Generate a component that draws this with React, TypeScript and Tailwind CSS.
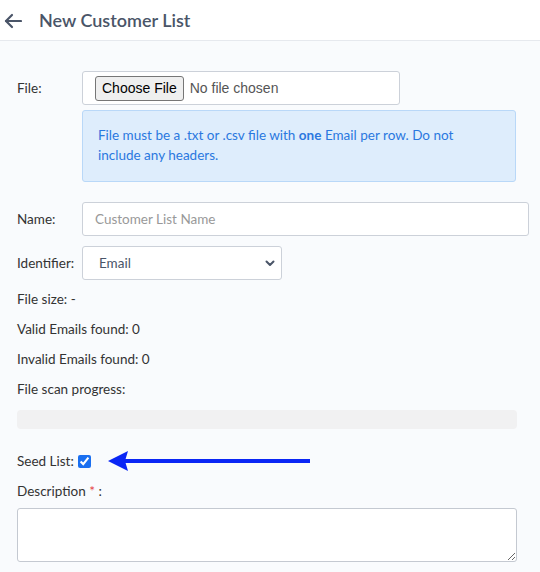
import { useState } from "react"

const font = { fontFamily: "Lato, 'Open Sans', Arial, sans-serif" }

function BackArrow() {
  return (
    <svg width="18" height="16" viewBox="0 0 18 16" fill="none" stroke="#4a5568" strokeWidth="2.2" strokeLinecap="round" strokeLinejoin="round">
      <path d="M17 8H2" />
      <path d="M8 2L2 8l6 6" />
    </svg>
  )
}

function PointerArrow() {
  return (
    <svg width="205" height="22" viewBox="0 0 205 22" className="ml-[17px]">
      <polygon points="0,11 20,1 17,11 20,21" fill="#0a26f5" />
      <rect x="16" y="9" width="186" height="4" fill="#0a26f5" />
    </svg>
  )
}

export default function App() {
  const [seed, setSeed] = useState(true)

  return (
    <div className="min-h-[572px] w-[540px] bg-[#f9fbfd] text-[13.5px] text-[#333]" style={font}>
      {/* Header */}
      <div className="flex h-[41px] items-center border-b border-[#e6e9ee] bg-white">
        <div className="ml-[4px] mt-[1px]">
          <BackArrow />
        </div>
        <h1 className="ml-[17px] text-[18px] font-semibold text-[#4a5568]">New Customer List</h1>
      </div>

      <div className="pl-[17px] pr-[11px] pt-[30px]">
        {/* File */}
        <div className="flex">
          <label className="w-[65px] shrink-0 pt-[7px] leading-[20px]">File:</label>
          <div>
            <div className="flex h-[34px] w-[318px] items-center rounded-[3px] border border-[#ccd1d9] bg-white pl-[12px]">
              <input
                type="file"
                className="text-[14px] text-[#555] file:mr-[6px] file:rounded-[3px] file:border file:border-[#767676] file:bg-[#efefef] file:px-[6px] file:py-[1px] file:text-[14px] file:text-black"
                style={{ fontFamily: "'Liberation Sans', Arial, sans-serif" }}
              />
            </div>
            <div className="mt-[5px] h-[72px] w-[434px] rounded-[3px] border border-[#b9d8f8] bg-[#deedfc] pl-[15px] pr-[30px] pt-[14px] leading-[20px] text-[#2a78df]">
              File must be a .txt or .csv file with <b>one</b> Email per row. Do not include any headers.
            </div>
          </div>
        </div>

        {/* Name */}
        <div className="mt-[20px] flex items-center">
          <label className="w-[65px] shrink-0">Name:</label>
          <input
            placeholder="Customer List Name"
            className="h-[34px] w-[447px] rounded-[3px] border border-[#ccd1d9] bg-white px-[12px] text-[13.5px] placeholder:text-[#999]"
          />
        </div>

        {/* Identifier */}
        <div className="mt-[10px] flex items-center">
          <label className="w-[65px] shrink-0">Identifier:</label>
          <div className="relative">
            <select className="h-[34px] w-[200px] appearance-none rounded-[3px] border border-[#ccd1d9] bg-white pl-[16px] text-[13.5px] text-[#4a5568]">
              <option>Email</option>
            </select>
            <svg className="pointer-events-none absolute right-[7px] top-[14px]" width="10" height="7" viewBox="0 0 10 7" fill="none" stroke="#4a5568" strokeWidth="2" strokeLinecap="round" strokeLinejoin="round">
              <path d="M1.5 1.5L5 5l3.5-3.5" />
            </svg>
          </div>
        </div>

        <div className="mt-[9px] leading-[20px]">File size: -</div>
        <div className="mt-[10px] leading-[20px]">Valid Emails found: 0</div>
        <div className="mt-[10px] leading-[20px]">Invalid Emails found: 0</div>
        <div className="mt-[10px] leading-[20px]">File scan progress:</div>

        <div className="mt-[11px] h-[19px] w-[500px] rounded-[4px] bg-[#f1f1f2]" />

        {/* Seed list */}
        <div className="mt-[22px] flex h-[20px] items-center">
          <label className="leading-[20px]">Seed List:</label>
          <input
            type="checkbox"
            checked={seed}
            onChange={() => setSeed(!seed)}
            className="ml-[4px] h-[13px] w-[13px] accent-[#1a6ff0]"
          />
          <PointerArrow />
        </div>

        <div className="mt-[10px] leading-[20px]">
          Description <span className="text-[#e53e3e]">*</span> :
        </div>
        <textarea className="mt-[7px] block h-[54px] w-[500px] rounded-[3px] border border-[#c4c9d1] bg-white" />
      </div>
    </div>
  )
}
